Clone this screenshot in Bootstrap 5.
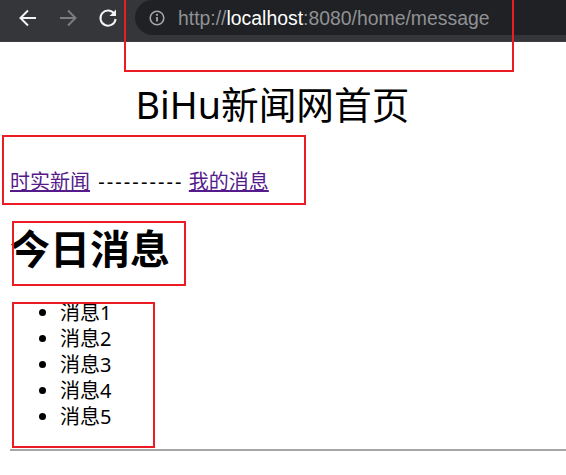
<!DOCTYPE html>
<html lang="zh">
<head>
<meta charset="utf-8">
<title>BiHu新闻网首页</title>
<link href="https://cdn.jsdelivr.net/npm/bootstrap@5.3.0/dist/css/bootstrap.min.css" rel="stylesheet">
<style>
html,body{height:100%;overflow:hidden}
body{background:#fff;color:#000;font-family:"Noto Sans","Noto Sans CJK SC",sans-serif;font-size:20px;line-height:26px;position:relative}
.chrome-bar{height:42px;background:#35363a;border-bottom:1px solid #3f4044;padding-left:18px;gap:20px}
.nav-ico{width:20px;height:20px;flex:none;margin-top:-6px}
.url-pill{height:35px;margin:-6px 0 0 -3px;border-radius:18px 0 0 18px;background:#202124;flex:1 1 0;min-width:0;padding-left:14px;color:#8f9194;font-size:19.4px;gap:13px;font-family:"Liberation Sans","Noto Sans",sans-serif;white-space:nowrap;overflow:hidden}
.url-host{color:#fff}
.page-wrap{padding:0 10px}
.main-title{font-size:37.7px;line-height:50px;font-weight:400;margin:38px 21px 0 0;text-align:center}
.nav-line{margin:38px 0 0;line-height:27px;white-space:nowrap}
.nav-line a{color:#551a8b}
.dash-run{letter-spacing:2.1px;margin-left:3px}
.sub-title{font-size:40px;line-height:50px;font-weight:700;margin:29px 0 0 0}
.msg-list{margin:26px 0 0;padding-left:50px;list-style:disc}
.msg-list li{height:26px}
.foot-rule{margin:19px 0 0 10px;border:0;border-top:2px solid #a6a6a6;opacity:1}
.mark-box{position:absolute;border:2px solid #ed1c24;pointer-events:none}
.mb-a{left:124px;top:-4px;width:390px;height:76px}
.mb-b{left:2px;top:135px;width:304px;height:70px}
.mb-c{left:12px;top:221px;width:174px;height:65px}
.mb-d{left:12px;top:302px;width:143px;height:146px}
</style>
</head>
<body>
<div class="chrome-bar d-flex align-items-center">
<svg class="nav-ico" viewBox="0 0 20 20" fill="none" stroke="#f1f3f4" stroke-width="2"><path d="M18 10H3M10 2.5 2.5 10l7.5 7.5"/></svg>
<svg class="nav-ico" viewBox="0 0 20 20" fill="none" stroke="#7c7d80" stroke-width="2"><path d="M2 10h15M10 2.5l7.5 7.5-7.5 7.5"/></svg>
<svg class="nav-ico" viewBox="0 0 20 20" fill="none" stroke="#f1f3f4" stroke-width="2"><path d="M16.5 6A7.6 7.6 0 1 0 17.6 11"/><path d="M18 1.5v6.5h-6.5z" fill="#f1f3f4" stroke="none"/></svg>
<div class="url-pill d-flex align-items-center">
<svg width="16" height="16" viewBox="0 0 16 16" fill="none"><circle cx="8" cy="8" r="6.8" stroke="#a3a5a8" stroke-width="1.6"/><path d="M8 7v4.5" stroke="#a3a5a8" stroke-width="1.8"/><circle cx="8" cy="4.8" r="1.1" fill="#a3a5a8"/></svg>
<span>http://<span class="url-host">localhost</span>:8080/home/message</span>
</div>
</div>
<div class="page-wrap">
<h1 class="main-title">BiHu新闻网首页</h1>
<p class="nav-line"><a href="#">时实新闻</a> <span class="dash-run">----------</span> <a href="#">我的消息</a></p>
<h2 class="sub-title">今日消息</h2>
<ul class="msg-list">
<li>消息1</li>
<li>消息2</li>
<li>消息3</li>
<li>消息4</li>
<li>消息5</li>
</ul>
</div>
<hr class="foot-rule">
<div class="mark-box mb-a"></div>
<div class="mark-box mb-b"></div>
<div class="mark-box mb-c"></div>
<div class="mark-box mb-d"></div>
<script src="https://cdn.jsdelivr.net/npm/bootstrap@5.3.0/dist/js/bootstrap.bundle.min.js"></script>
</body>
</html>
